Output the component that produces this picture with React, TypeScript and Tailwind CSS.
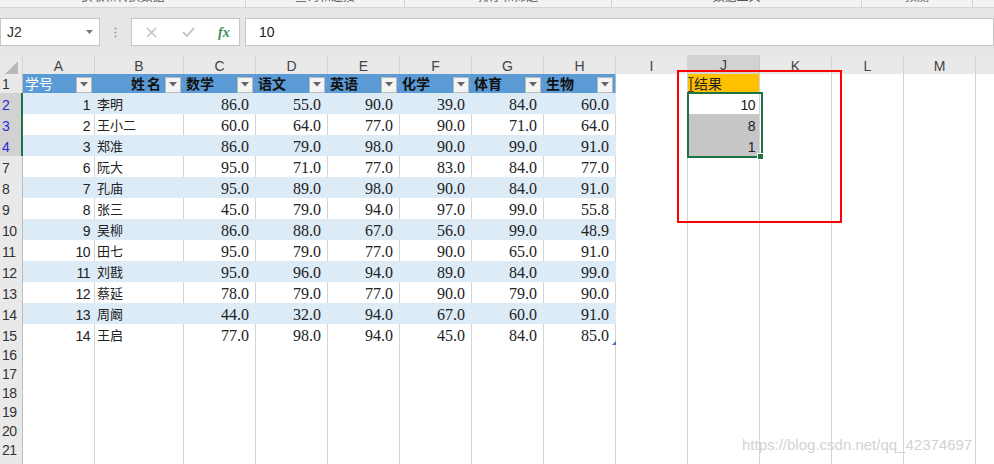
const GRID =
  "grid grid-cols-[23px_72px_89px_72px_72px_72px_72px_72px_72px_72px_72px_72px_72px_72px_72px]";

const COLS = ["A", "B", "C", "D", "E", "F", "G", "H", "I", "J", "K", "L", "M", "N"];

const HEADERS = ["学号", "姓名", "数学", "语文", "英语", "化学", "体育", "生物"];

const ROWS = [
  { n: 2, id: 1, name: "李明", s: ["86.0", "55.0", "90.0", "39.0", "84.0", "60.0"], j: "10" },
  { n: 3, id: 2, name: "王小二", s: ["60.0", "64.0", "77.0", "90.0", "71.0", "64.0"], j: "8" },
  { n: 4, id: 3, name: "郑准", s: ["86.0", "79.0", "98.0", "90.0", "99.0", "91.0"], j: "1" },
  { n: 7, id: 6, name: "阮大", s: ["95.0", "71.0", "77.0", "83.0", "84.0", "77.0"] },
  { n: 8, id: 7, name: "孔庙", s: ["95.0", "89.0", "98.0", "90.0", "84.0", "91.0"] },
  { n: 9, id: 8, name: "张三", s: ["45.0", "79.0", "94.0", "97.0", "99.0", "55.8"] },
  { n: 10, id: 9, name: "吴柳", s: ["86.0", "88.0", "67.0", "56.0", "99.0", "48.9"] },
  { n: 11, id: 10, name: "田七", s: ["95.0", "79.0", "77.0", "90.0", "65.0", "91.0"] },
  { n: 12, id: 11, name: "刘戡", s: ["95.0", "96.0", "94.0", "89.0", "84.0", "99.0"] },
  { n: 13, id: 12, name: "蔡延", s: ["78.0", "79.0", "77.0", "90.0", "79.0", "90.0"] },
  { n: 14, id: 13, name: "周阚", s: ["44.0", "32.0", "94.0", "67.0", "60.0", "91.0"] },
  { n: 15, id: 14, name: "王启", s: ["77.0", "98.0", "94.0", "45.0", "84.0", "85.0"] },
];

const RIBBON = [
  { w: "w-[246px]", t: "获取和转换数据" },
  { w: "w-[159px]", t: "查询和连接" },
  { w: "w-[207px]", t: "排序和筛选" },
  { w: "w-[250px]", t: "数据工具" },
  { w: "w-[111px]", t: "预测" },
  { w: "w-[40px]", t: "" },
];

const SERIF = "font-['Liberation_Serif','Noto_Sans_CJK_SC',serif]";

function RowHead({ label, selected }: { label: number; selected?: boolean }) {
  return (
    <div
      className={
        selected
          ? "flex items-center border-b border-r-2 border-b-[#c8c8c8] border-r-[#217346] bg-[#d2d2d2] pl-[2px] text-[14px] tracking-[-0.5px] text-[#2b2bd6]"
          : "flex items-center border-b border-r border-b-[#d4d4d4] border-r-[#bdbdbd] bg-[#e9e9e9] pl-[2px] text-[14px] tracking-[-0.5px] text-[#333]"
      }
    >
      {label}
    </div>
  );
}

function Empty() {
  return <div className="border-b border-r border-[#d4d4d4] bg-white" />;
}

function FilterBtn() {
  return (
    <span className="ml-auto mr-[2px] flex h-[16px] w-[16px] shrink-0 items-center justify-center border border-[#b9b9b9] bg-[#f4f4f4]">
      <svg width="8" height="5" viewBox="0 0 8 5">
        <path d="M0 0h8L4 4.5z" fill="#666" />
      </svg>
    </span>
  );
}

export default function App() {
  return (
    <div className="relative h-[464px] w-[994px] overflow-hidden bg-white font-['Liberation_Sans','Noto_Sans_CJK_SC',sans-serif] text-[#222]">
      {/* ribbon group labels, cut off at the top */}
      <div className="flex h-[8px] overflow-hidden border-b border-[#d5d5d5] bg-[#f3f3f3]">
        {RIBBON.map((r) => (
          <div key={r.w} className={`${r.w} shrink-0 border-r border-[#d0d0d0] text-center`}>
            <div className="-mt-[9px] text-[12px] leading-[12px] text-[#555]">{r.t}</div>
          </div>
        ))}
      </div>

      {/* formula bar */}
      <div className="flex h-[47px] bg-[#e6e6e6] pt-[10px]">
        <div className="flex h-[28px] w-[100px] items-center border border-[#c6c6c6] bg-white pl-[6px] text-[14px] text-[#333]">
          J2
          <svg className="ml-auto mr-[6px]" width="7" height="4" viewBox="0 0 7 4">
            <path d="M0 0h7L3.5 4z" fill="#777" />
          </svg>
        </div>
        <div className="flex h-[28px] w-[31px] items-center justify-center">
          <svg width="3" height="11" viewBox="0 0 3 11">
            <circle cx="1.5" cy="1.5" r="1" fill="#9a9a9a" />
            <circle cx="1.5" cy="5.5" r="1" fill="#9a9a9a" />
            <circle cx="1.5" cy="9.5" r="1" fill="#9a9a9a" />
          </svg>
        </div>
        <div className="flex h-[28px] w-[109px] items-center border border-[#c6c6c6] bg-white">
          <svg className="ml-[14px]" width="11" height="11" viewBox="0 0 11 11">
            <path d="M1 1l9 9M10 1l-9 9" stroke="#bcbcbc" strokeWidth="1.4" />
          </svg>
          <svg className="ml-[25px]" width="13" height="10" viewBox="0 0 13 10">
            <path d="M1 5l4 4 7-8" stroke="#bcbcbc" strokeWidth="1.6" fill="none" />
          </svg>
          <span className={`ml-[23px] text-[14px] font-bold italic text-[#3f8f5a] ${SERIF}`}>fx</span>
        </div>
        <div className="ml-[5px] flex h-[28px] flex-1 items-center border border-[#c6c6c6] bg-white pl-[13px] text-[14px] text-[#222]">
          10
        </div>
      </div>

      {/* column headers */}
      <div className={`${GRID} h-[19px]`}>
        <div className="flex items-end justify-end border-b border-r border-b-[#bdbdbd] border-r-[#d4d4d4] bg-[#e9e9e9] pb-[3px] pr-[4px]">
          <svg width="13" height="13" viewBox="0 0 13 13">
            <path d="M13 0V13H0z" fill="#b9b9b9" />
          </svg>
        </div>
        {COLS.map((c) => (
          <div
            key={c}
            className={
              c === "J"
                ? "flex items-center justify-center border-b-2 border-r border-b-[#217346] border-r-[#c8c8c8] bg-[#d2d2d2] text-[14px] text-[#444]"
                : "flex items-center justify-center border-b border-r border-b-[#bdbdbd] border-r-[#d4d4d4] bg-[#e9e9e9] text-[14px] text-[#444]"
            }
          >
            {c}
          </div>
        ))}
      </div>

      {/* table header row */}
      <div className={`${GRID} h-[19px]`}>
        <RowHead label={1} />
        {HEADERS.map((h, i) => (
          <div
            key={h}
            className={
              i === 7
                ? "flex items-center border-b border-r border-b-[#9bc2e6] border-r-[#9bc2e6] bg-[#5b9bd5] pl-[2px]"
                : "flex items-center border-b border-r border-b-[#9bc2e6] border-r-[#5b9bd5] bg-[#5b9bd5] pl-[2px]"
            }
          >
            {i === 0 && <span className="text-[14px] text-white">{h}</span>}
            {i === 1 && (
              <span className="ml-auto mr-[2px] text-[14px] font-bold tracking-[2px] text-[#111]">{h}</span>
            )}
            {i > 1 && <span className="text-[14px] font-bold text-[#111]">{h}</span>}
            {i === 1 ? (
              <span className="mr-[2px] flex h-[16px] w-[16px] shrink-0 items-center justify-center border border-[#b9b9b9] bg-[#f4f4f4]">
                <svg width="8" height="5" viewBox="0 0 8 5">
                  <path d="M0 0h8L4 4.5z" fill="#666" />
                </svg>
              </span>
            ) : (
              <FilterBtn />
            )}
          </div>
        ))}
        <Empty />
        <div className="flex items-center border-b border-r border-[#d4d4d4] bg-[#ffc000] pl-[6px] text-[14px] text-[#222]">
          结果
        </div>
        <Empty />
        <Empty />
        <Empty />
        <Empty />
      </div>

      {/* data rows */}
      {ROWS.map((r, ri) => {
        const band = ri % 2 === 0;
        const cell = band
          ? "flex items-center border-b border-r border-b-[#9bc2e6] border-r-[#ddebf7] bg-[#ddebf7]"
          : "flex items-center border-b border-r border-b-[#9bc2e6] border-r-[#d4d4d4] bg-white";
        return (
          <div key={r.n} className={`${GRID} h-[21px]`}>
            <RowHead label={r.n} selected={r.n <= 4} />
            <div className={`${cell} justify-end pr-[4px] text-[14px] tracking-[-0.5px]`}>{r.id}</div>
            <div className={`${cell} pl-[2px] text-[13px]`}>{r.name}</div>
            {r.s.map((v, i) => (
              <div
                key={i}
                className={
                  i === 5
                    ? `${cell} border-r-[#9bc2e6] justify-end pr-[6px] text-[16px] ${SERIF}`
                    : `${cell} justify-end pr-[6px] text-[16px] ${SERIF}`
                }
              >
                {v}
              </div>
            ))}
            <Empty />
            {r.j ? (
              <div
                className={
                  r.n === 2
                    ? "flex items-center justify-end border-b border-r border-[#d4d4d4] bg-white pr-[4px] text-[14px] tracking-[-0.5px]"
                    : "flex items-center justify-end border-b border-r border-[#d4d4d4] bg-[#c6c6c6] pr-[4px] text-[14px] tracking-[-0.5px]"
                }
              >
                {r.j}
              </div>
            ) : (
              <Empty />
            )}
            <Empty />
            <Empty />
            <Empty />
            <Empty />
          </div>
        );
      })}

      {/* empty rows */}
      {[16, 17, 18, 19, 20, 21, 22].map((n) => (
        <div key={n} className={`${GRID} h-[19px]`}>
          <RowHead label={n} />
          {COLS.map((c) => (
            <Empty key={c} />
          ))}
        </div>
      ))}

      {/* text cursor over J1 */}
      <svg className="absolute left-[688px] top-[77px]" width="6" height="15" viewBox="0 0 6 15">
        <path d="M0.5 0.5h2M3.5 0.5h2M3 1v13M0.5 14.5h2M3.5 14.5h2" stroke="#111" strokeWidth="1" />
      </svg>

      {/* selection J2:J4 */}
      <div className="absolute left-[687px] top-[92px] h-[66px] w-[76px] border-2 border-[#217346]" />
      <div className="absolute left-[757px] top-[153px] h-[7px] w-[7px] border border-white bg-[#217346]" />

      {/* table resize handle */}
      <svg className="absolute left-[612px] top-[341px]" width="4" height="4" viewBox="0 0 4 4">
        <path d="M4 0V4H0z" fill="#4a67c2" />
      </svg>

      {/* red annotation box */}
      <div className="absolute left-[677px] top-[70px] h-[153px] w-[165px] border-2 border-[#ff0000]" />

      {/* watermark */}
      <div className="absolute left-[742px] top-[436px] text-[15px] leading-[17px] text-[#d2d2d2]">
        https://blog.csdn.net/qq_42374697
      </div>
    </div>
  );
}
